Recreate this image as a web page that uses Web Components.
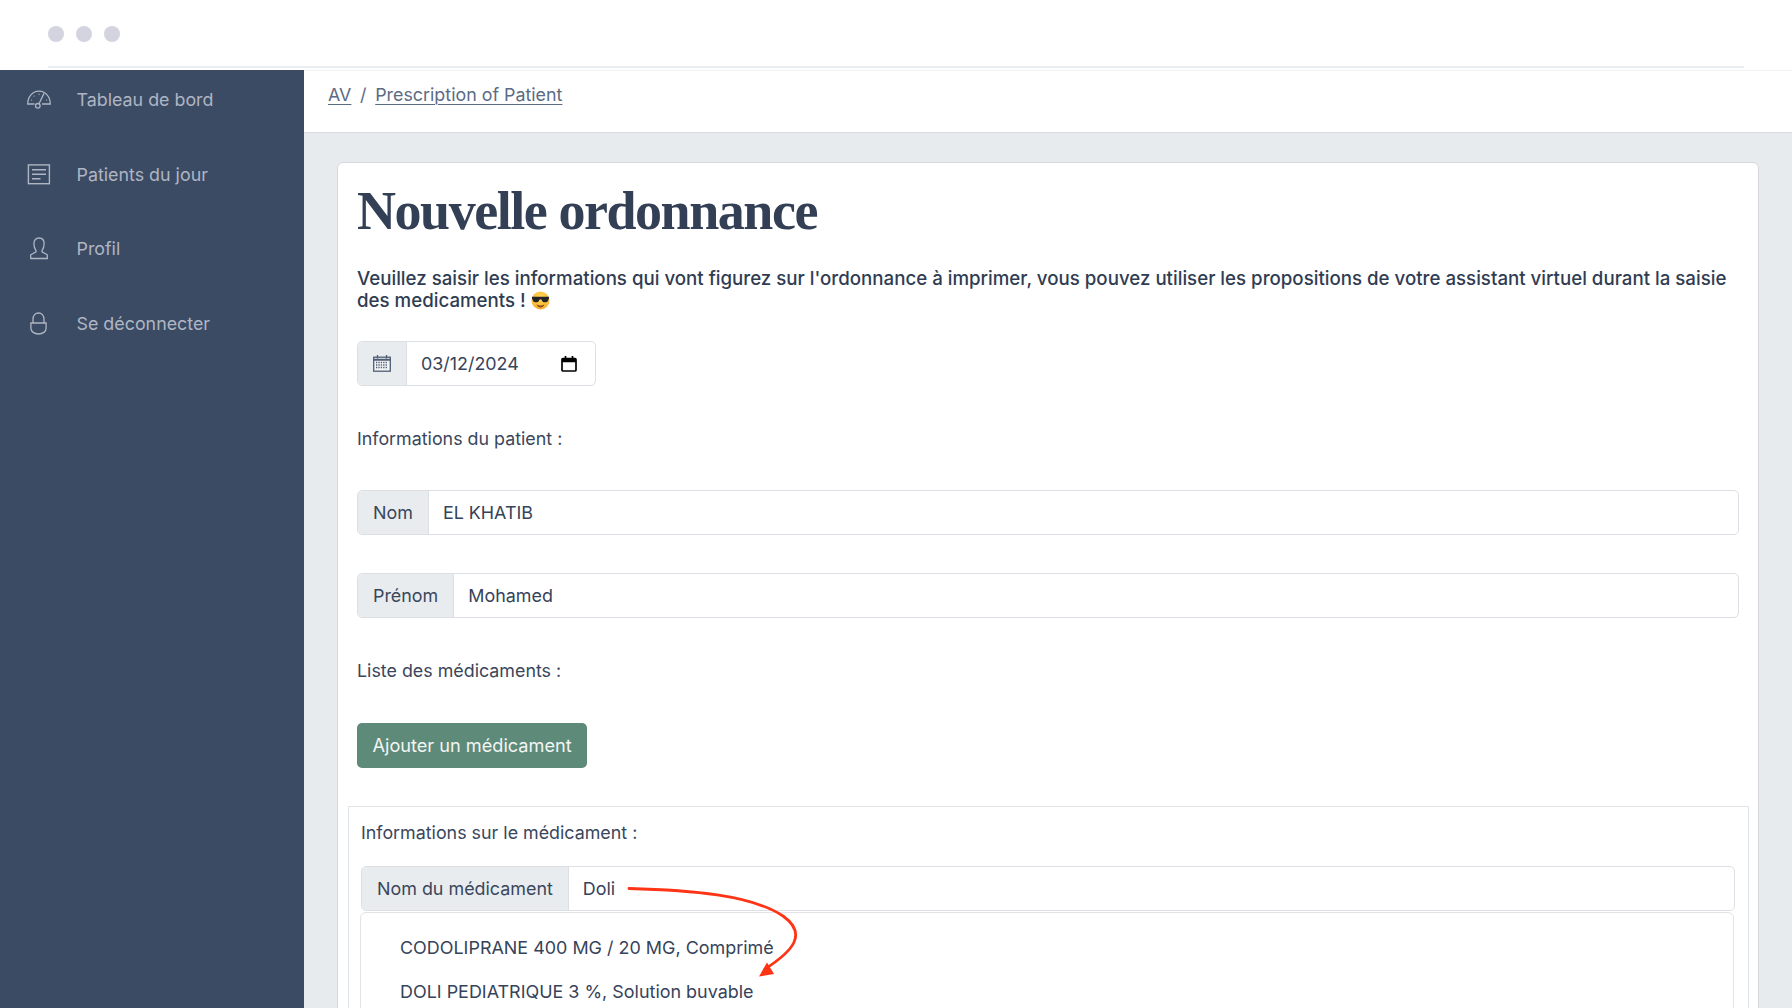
<!DOCTYPE html>
<html lang="fr">
<head>
<meta charset="utf-8">
<title>Nouvelle ordonnance</title>
<style>
  html, body { margin: 0; height: 100%; overflow: hidden; background: #fff; }
  body { font-family: Inter, "Liberation Sans", sans-serif; font-size: 17.85px; color: #36435a; }
</style>
</head>
<body>
<app-shell>
  <side-nav slot="nav">
    <nav-item label="Tableau de bord">
      <svg width="24" height="20" viewBox="0 0 24 20" fill="none" stroke="currentColor" stroke-width="1.3">
        <path d="M7.500 14H.7C.7 6.800 5.600 1.200 12 1.200S23.300 6.800 23.300 14H15"/>
        <circle cx="10.800" cy="15.800" r="2.300"/>
        <path d="M12 13.800 17 3.400M4.200 10.200h.9M6.800 5.800l.6.600M12 3.800v.9M19.200 10.200h.9"/>
      </svg>
    </nav-item>
    <nav-item label="Patients du jour">
      <svg width="24" height="21" viewBox="0 0 24 21" fill="none" stroke="currentColor" stroke-width="1.4">
        <rect x="1.400" y=".9" width="21" height="18.800"/>
        <path d="M5 5.800h14M5 10.300h14M5 14.800h8.500"/>
      </svg>
    </nav-item>
    <nav-item label="Profil">
      <svg width="18" height="23" viewBox="0 0 18 23" fill="none" stroke="currentColor" stroke-width="1.3">
        <path d="M6 13.600C4.400 11.600 3.900 9 3.900 6.600 3.900 3.200 6 1 9 1s5.100 2.200 5.100 5.600c0 2.400-.5 5-2.100 7v1.200l5.300 3v3.700H.7v-3.700l5.300-3z"/>
      </svg>
    </nav-item>
    <nav-item label="Se déconnecter">
      <svg width="17" height="23" viewBox="0 0 17 23" fill="none" stroke="currentColor" stroke-width="1.3">
        <path d="M3 11V7.500C3 3.500 5.300 1 8.500 1S14 3.500 14 7.500V11"/>
        <path d="M.9 11h15.200v5.200c0 3.400-3.300 5.800-7.600 5.800S.9 19.600.9 16.200z"/>
      </svg>
    </nav-item>
  </side-nav>

  <bread-crumbs slot="crumbs">
    <a>AV</a>
    <a>Prescription of Patient</a>
  </bread-crumbs>

  <app-card>
    <page-title>Nouvelle ordonnance</page-title>
    <intro-text>Veuillez saisir les informations qui vont figurez sur l'ordonnance à imprimer, vous pouvez utiliser les propositions de votre assistant virtuel durant la saisie des medicaments !
      <svg width="19" height="19" viewBox="0 0 19 19" style="vertical-align:-3px">
        <defs>
          <radialGradient id="face" cx=".5" cy=".35" r=".75"><stop offset="0" stop-color="#ffd85a"/><stop offset=".7" stop-color="#fbb836"/><stop offset="1" stop-color="#ee8a24"/></radialGradient>
        </defs>
        <circle cx="9.500" cy="9.500" r="9" fill="url(#face)"/>
        <path d="M1 5.800h17v1.600l-1.200 2.500c-.5 1-1.500 1.300-3 1.300-1.600 0-2.800-.8-3.300-2.800H8.500c-.5 2-1.700 2.800-3.300 2.800-1.500 0-2.500-.3-3-1.300L1 7.400z" fill="#23232a"/>
        <path d="M5.500 13.300c2.300 1.700 5.700 1.700 8 0-.6 2.400-2.200 3.300-4 3.300s-3.400-.9-4-3.300z" fill="#8a4a18"/>
      </svg>
    </intro-text>

    <input-group width="239px" style="margin-top:28.700px">
      <svg slot="prefix" width="18" height="17" viewBox="0 0 18 17" fill="none">
        <rect x=".7" y="2.200" width="16.600" height="14" fill="#f2f3f5" stroke="#4f5d73" stroke-width="1.300"/>
        <path d="M.7 4.800h16.600" stroke="#4f5d73" stroke-width="2"/>
        <path d="M4.500 0v3.500M13.500 0v3.500" stroke="#4f5d73" stroke-width="1.300"/>
        <path d="M3 7.500h12M3 10h12M3 12.500h12" stroke="#4f5d73" stroke-width="1.300" stroke-dasharray="1.300 1.100"/>
      </svg>
      <span>03/12/2024</span>
      <svg slot="suffix" width="16" height="16" viewBox="0 0 16 16" fill="none" stroke="#000">
        <rect x="1" y="2.500" width="14" height="12.500" rx="1" stroke-width="1.700"/>
        <path d="M1 4.500h14" stroke-width="3.500"/>
        <path d="M4.500 0v3M11.500 0v3" stroke-width="1.700"/>
      </svg>
    </input-group>

    <form-label style="margin-top:40.400px">Informations du patient :</form-label>
    <input-group style="margin-top:39.700px"><span slot="prefix">Nom</span><span>EL KHATIB</span></input-group>
    <input-group style="margin-top:37.500px"><span slot="prefix">Prénom</span><span>Mohamed</span></input-group>
    <form-label style="margin-top:41.400px">Liste des médicaments :</form-label>
    <green-button style="margin-top:39.200px">Ajouter un médicament</green-button>

    <med-panel>
      <form-label>Informations sur le médicament :</form-label>
      <input-group style="margin-top:21px"><span slot="prefix">Nom du médicament</span><span>Doli</span></input-group>
      <suggest-list>
        <div>CODOLIPRANE 400 MG / 20 MG, Comprimé</div>
        <div>DOLI PEDIATRIQUE 3 %, Solution buvable</div>
      </suggest-list>
    </med-panel>
  </app-card>

  <svg slot="overlay" width="1792" height="1008" viewBox="0 0 1792 1008" fill="none">
    <path d="M629 888.500C690 890 752 895 783 916 808 934 793 951 765 969" stroke="#ff3415" stroke-width="2.800" stroke-linecap="round"/>
    <path d="M759 976.500 767 962.500 774 974z" fill="#ff3415"/>
  </svg>
</app-shell>

<script>
class AppShell extends HTMLElement {
  constructor() {
    super();
    this.attachShadow({ mode: 'open' }).innerHTML = `
      <style>
        :host { display: flex; flex-direction: column; position: relative; width: 1792px; height: 1008px; overflow: hidden; }
        .top { flex: 0 0 70px; box-sizing: border-box; padding: 0 48px; }
        .top-inner { height: 68px; box-sizing: border-box; border-bottom: 2px solid #e9eef3; display: flex; align-items: flex-start; gap: 12px; padding-top: 26px; }
        .dot { width: 16px; height: 16px; border-radius: 50%; background: #d3d4e0; }
        .row { flex: 1; display: flex; min-height: 0; }
        .main { flex: 1; display: flex; flex-direction: column; min-width: 0; background: #e8ebee; }
        .content { flex: 1; padding: 29px 33px 0 33px; min-height: 0; }
        ::slotted([slot=overlay]) { position: absolute; left: 0; top: 0; pointer-events: none; }
      </style>
      <div class="top"><div class="top-inner"><i class="dot"></i><i class="dot"></i><i class="dot"></i></div></div>
      <div class="row">
        <slot name="nav"></slot>
        <div class="main">
          <slot name="crumbs"></slot>
          <div class="content"><slot></slot></div>
        </div>
      </div>
      <slot name="overlay"></slot>`;
  }
}
customElements.define('app-shell', AppShell);

class SideNav extends HTMLElement {
  constructor() {
    super();
    this.attachShadow({ mode: 'open' }).innerHTML = `
      <style>
        :host { display: flex; flex-direction: column; gap: 15.700px; flex: 0 0 304px; background: #3c4b64; color: #aeb5c3; }
      </style>
      <slot></slot>`;
  }
}
customElements.define('side-nav', SideNav);

class NavItem extends HTMLElement {
  constructor() {
    super();
    this.attachShadow({ mode: 'open' }).innerHTML = `
      <style>
        :host { display: flex; align-items: center; height: 59px; font-size: 17.850px; }
        .icon { flex: 0 0 76.500px; box-sizing: border-box; padding-left: 26.500px; }
        .box { width: 24px; display: flex; justify-content: center; }
      </style>
      <div class="icon"><div class="box"><slot></slot></div></div>
      <span class="label"></span>`;
    this.shadowRoot.querySelector('.label').textContent = this.getAttribute('label');
  }
}
customElements.define('nav-item', NavItem);

class BreadCrumbs extends HTMLElement {
  constructor() {
    super();
    this.attachShadow({ mode: 'open' }).innerHTML = `
      <style>
        :host { display: block; height: 63px; box-sizing: border-box; background: #fff; border-top: 1px solid #f3f3f5; border-bottom: 1px solid #d8dbe0; padding: 12px 0 0 24px; font-size: 17.850px; color: #5c6b84; }
        .trail { display: flex; gap: 8.700px; line-height: 24px; }
        ::slotted(a) { color: #5c6b84; text-decoration: underline; text-underline-offset: 3px; text-decoration-thickness: 1px; }
        .sep { order: 1; }
        ::slotted(a:first-child) { order: 0; }
        ::slotted(a:last-child) { order: 2; }
      </style>
      <div class="trail"><slot></slot><span class="sep">/</span></div>`;
  }
}
customElements.define('bread-crumbs', BreadCrumbs);

class AppCard extends HTMLElement {
  constructor() {
    super();
    this.attachShadow({ mode: 'open' }).innerHTML = `
      <style>
        :host { display: block; box-sizing: border-box; height: 900px; background: #fff; border: 1px solid #d5d8dd; border-radius: 6px; padding: 17.700px 19px; }
      </style>
      <slot></slot>`;
  }
}
customElements.define('app-card', AppCard);

class PageTitle extends HTMLElement {
  constructor() {
    super();
    this.attachShadow({ mode: 'open' }).innerHTML = `
      <style>
        :host { display: block; font-family: "Liberation Serif", serif; font-weight: 700; font-size: 54px; line-height: 60px; color: #323f55; letter-spacing: -1.450px; }
      </style>
      <slot></slot>`;
  }
}
customElements.define('page-title', PageTitle);

class IntroText extends HTMLElement {
  constructor() {
    super();
    this.attachShadow({ mode: 'open' }).innerHTML = `
      <style>
        :host { display: block; margin-top: 27px; font-weight: 500; font-size: 18.710px; line-height: 22.500px; color: #303c52; }
      </style>
      <slot></slot>`;
  }
}
customElements.define('intro-text', IntroText);

class FormLabel extends HTMLElement {
  constructor() {
    super();
    this.attachShadow({ mode: 'open' }).innerHTML = `
      <style>
        :host { display: block; font-size: 17.850px; line-height: 24px; color: #3a465c; }
      </style>
      <slot></slot>`;
  }
}
customElements.define('form-label', FormLabel);

class InputGroup extends HTMLElement {
  constructor() {
    super();
    this.attachShadow({ mode: 'open' }).innerHTML = `
      <style>
        :host { display: flex; box-sizing: border-box; height: 45px; border: 1.500px solid #dcdfe4; border-radius: 5px; font-size: 17.900px; color: #36435a; overflow: hidden; background: #fff; }
        .pre { display: flex; align-items: center; padding: 0 15px; background: #e9ecef; border-right: 1.500px solid #dcdfe4; white-space: nowrap; color: #3a465c; }
        .val { flex: 1; display: flex; align-items: center; padding: 0 14px; }
        .suf { display: flex; align-items: center; padding-right: 18px; }
      </style>
      <div class="pre"><slot name="prefix"></slot></div>
      <div class="val" role="textbox"><slot></slot></div>
      <div class="suf"><slot name="suffix"></slot></div>`;
    if (this.hasAttribute('width')) this.style.width = this.getAttribute('width');
  }
}
customElements.define('input-group', InputGroup);

class GreenButton extends HTMLElement {
  constructor() {
    super();
    this.attachShadow({ mode: 'open' }).innerHTML = `
      <style>
        :host { display: block; width: fit-content; }
        button { display: block; height: 45px; padding: 0 15.500px; border: 0; border-radius: 5px; background: #5e8a7a; color: #f2f5f4; font: inherit; font-size: 18.150px; }
      </style>
      <button><slot></slot></button>`;
  }
}
customElements.define('green-button', GreenButton);

class MedPanel extends HTMLElement {
  constructor() {
    super();
    this.attachShadow({ mode: 'open' }).innerHTML = `
      <style>
        :host { display: block; box-sizing: border-box; margin: 38px -9.500px 0; height: 400px; border: 1.500px solid #e1e3e7; padding: 14.500px 12.500px 0 12.500px; }
      </style>
      <slot></slot>`;
  }
}
customElements.define('med-panel', MedPanel);

class SuggestList extends HTMLElement {
  constructor() {
    super();
    this.attachShadow({ mode: 'open' }).innerHTML = `
      <style>
        :host { display: block; box-sizing: border-box; margin: 1px 1px 0 -1px; height: 260px; border: 1.500px solid #e1e3e7; border-radius: 6px; padding: 22.500px 39px; background: #fff; font-size: 17.950px; color: #36435a; }
        ::slotted(div) { height: 44px; line-height: 24px; }
      </style>
      <slot></slot>`;
  }
}
customElements.define('suggest-list', SuggestList);
</script>
</body>
</html>
